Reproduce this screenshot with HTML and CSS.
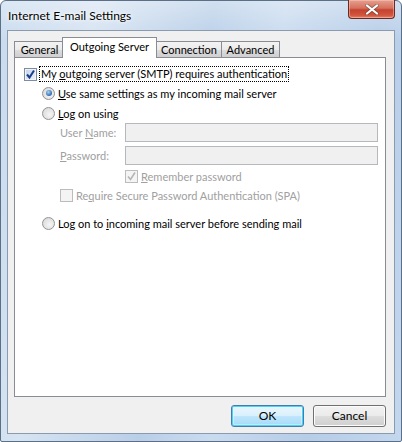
FILE: index.html
```html
<!DOCTYPE html>
<html>
<head>
<meta charset="utf-8">
<link rel="stylesheet" href="styles.css">
</head>
<body>
<div class="window">
  <div class="titlebar">
    <span class="title">Internet E-mail Settings</span>
    <div class="close">
      <svg width="14" height="11" viewBox="0 0 14 11"><path d="M2 1.5 L12 9.5 M12 1.5 L2 9.5" stroke="#3b3b3b" stroke-width="3.6" stroke-linecap="round" opacity="0.45"/><path d="M2 1.5 L12 9.5 M12 1.5 L2 9.5" stroke="#fff" stroke-width="2.2" stroke-linecap="round"/></svg>
    </div>
  </div>
  <div class="client">
    <div class="tabs">
      <div class="tab t-general">General</div>
      <div class="tab selected">Outgoing Server</div>
      <div class="tab t-conn">Connection</div>
      <div class="tab t-adv">Advanced</div>
    </div>
    <div class="panel">
      <div class="row r-auth">
        <span class="cb checked"><svg width="11" height="11" viewBox="0 0 11 11"><path d="M2 5.5 L4.5 8.5 L9 1.5" fill="none" stroke="#1b3d8f" stroke-width="2"/></svg></span>
        <span class="focus">My <u>o</u>utgoing server (SMTP) requires authentication</span>
      </div>
      <div class="row r-same">
        <span class="radio on"><span class="dot"></span></span>
        <span class="lbl"><u>U</u>se same settings as my incoming mail server</span>
      </div>
      <div class="row r-logon">
        <span class="radio"></span>
        <span class="lbl"><u>L</u>og on using</span>
      </div>
      <div class="row r-field r-user">
        <span class="flabel">User <u>N</u>ame:</span>
        <span class="input"></span>
      </div>
      <div class="row r-field r-pass">
        <span class="flabel"><u>P</u>assword:</span>
        <span class="input"></span>
      </div>
      <div class="row r-remember">
        <span class="cb disabled"><svg width="11" height="11" viewBox="0 0 11 11"><path d="M2 5.5 L4.5 8.5 L9 1.5" fill="none" stroke="#b5b5b5" stroke-width="1.6"/></svg></span>
        <span class="lbl dis"><u>R</u>emember password</span>
      </div>
      <div class="row r-spa">
        <span class="cb disabled"></span>
        <span class="lbl dis">Re<u>q</u>uire Secure Password Authentication (SPA)</span>
      </div>
      <div class="row r-before">
        <span class="radio"></span>
        <span class="lbl">Log on to <u>i</u>ncoming mail server before sending mail</span>
      </div>
    </div>
    <div class="buttons">
      <div class="btn default">OK</div>
      <div class="btn">Cancel</div>
    </div>
  </div>
</div>
</body>
</html>
```
FILE: styles.css
```css
html, body {
  margin: 0;
  padding: 0;
  background: #fff;
}
body {
  font-family: "Lato", "Liberation Sans", sans-serif;
  font-size: 11px;
  color: #000;
}
.window {
  width: 402px;
  height: 442px;
  box-sizing: border-box;
  border: 1px solid #5b6f86;
  border-radius: 6px 6px 2px 2px;
  padding: 0 6px 7px 6px;
  background:
    linear-gradient(to bottom, rgba(255,255,255,0.35), rgba(255,255,255,0) 40px),
    linear-gradient(100deg, #c9dbee 0%, #d6e3f2 20%, #b9cfe8 45%, #c9dbef 60%, #b6cde8 80%, #c3d7ee 100%);
  display: flex;
  flex-direction: column;
}
.titlebar {
  height: 29px;
  display: flex;
  align-items: flex-start;
  justify-content: space-between;
}
.title {
  margin-top: 7px;
  margin-left: 1px;
  font-size: 12px;
  color: #000;
  text-shadow: 0 0 6px #fff, 0 0 3px #fff;
}
.close {
  width: 45px;
  height: 18px;
  margin-top: -1px;
  border: 1px solid #6b2a21;
  border-top: none;
  border-radius: 0 0 4px 4px;
  background: linear-gradient(to bottom, #e6a08f 0%, #d7705e 45%, #c4432f 55%, #d2553d 85%, #e4846a 100%);
  box-shadow: inset 0 0 0 1px rgba(255,210,200,0.45);
  display: flex;
  align-items: center;
  justify-content: center;
}
.client {
  flex: 1;
  border: 1px solid #8a9bb0;
  background: #f0f0f0;
  padding: 6px 8px 0 6px;
  display: flex;
  flex-direction: column;
}
.tabs {
  display: flex;
  align-items: flex-end;
  height: 20px;
  position: relative;
  z-index: 2;
}
.tab {
  height: 15px;
  line-height: 16px;
  border: 1px solid #898c95;
  border-bottom: none;
  margin-right: -1px;
  text-align: center;
  background: linear-gradient(to bottom, #f3f3f3 0%, #ebebeb 50%, #dddddd 51%, #cfcfcf 100%);
  color: #000;
  white-space: nowrap;
}
.t-general { width: 49px; }
.t-conn { width: 64px; }
.t-adv { width: 57px; }
.tab.selected {
  width: 93px;
  height: 20px;
  line-height: 18px;
  margin: 0 -1px -1px -2px;
  background: #fff;
  position: relative;
  z-index: 3;
}
.panel {
  height: 338px;
  border: 1px solid #898c95;
  background: #fff;
  position: relative;
  z-index: 1;
}
.row {
  display: flex;
  align-items: center;
  height: 16px;
  white-space: nowrap;
}
.r-auth { margin-top: 8px; padding-left: 9px; }
.r-same { margin-top: 3px; padding-left: 27px; }
.r-logon { margin-top: 4px; padding-left: 27px; }
.r-field { height: 19px; padding-left: 45px; }
.r-user { margin-top: 2px; }
.r-pass { margin-top: 4px; }
.r-remember { margin-top: 3px; padding-left: 110px; }
.r-spa { margin-top: 3px; padding-left: 45px; }
.r-before { margin-top: 12px; padding-left: 27px; }

.cb {
  width: 11px;
  height: 11px;
  border: 1px solid #8f8f8f;
  background: linear-gradient(135deg, #dcdcdc, #fbfbfb);
  box-shadow: inset 0 0 0 1px #f4f4f4;
  display: inline-flex;
  align-items: center;
  justify-content: center;
  flex: none;
}
.cb.checked {
  background: linear-gradient(135deg, #c4d4ea, #eef3fa);
  border-color: #7b8da5;
}
.cb.disabled {
  border-color: #bcbcbc;
  background: #f4f4f4;
  box-shadow: none;
}
.focus {
  margin-left: 2px;
  padding: 0 1px;
  border: 1px dotted #000;
  line-height: 14px;
}
.radio {
  width: 11px;
  height: 11px;
  border-radius: 50%;
  border: 1px solid #939393;
  background: radial-gradient(circle at 60% 60%, #f6f6f6, #d4d4d4);
  display: inline-flex;
  align-items: center;
  justify-content: center;
  flex: none;
}
.radio.on .dot {
  width: 6px;
  height: 6px;
  border-radius: 50%;
  background: radial-gradient(circle at 40% 35%, #a9d5f4, #2e6ab0 70%, #1c4c88);
}
.lbl {
  margin-left: 3px;
}
.lbl.dis, .flabel {
  color: #a0a0a0;
}
.flabel {
  width: 65px;
  flex: none;
}
.input {
  width: 251px;
  height: 17px;
  border: 1px solid #b5b9bd;
  background: #f0f0f0;
}
.buttons {
  display: flex;
  justify-content: flex-end;
  gap: 9px;
  margin-top: 8px;
}
.btn {
  width: 71px;
  height: 20px;
  line-height: 20px;
  font-size: 12px;
  text-align: center;
  border: 1px solid #707070;
  border-radius: 3px;
  background: linear-gradient(to bottom, #f2f2f2 0%, #ebebeb 50%, #dddddd 51%, #cfcfcf 100%);
  box-shadow: inset 0 0 0 1px #fcfcfc;
}
.btn.default {
  border-color: #3c7fb1;
  background: linear-gradient(to bottom, #eaf6fd 0%, #d9f0fc 50%, #bee6fd 51%, #a7d9f5 100%);
  box-shadow: inset 0 0 0 1px #48d4f7, inset 0 0 0 2px rgba(255,255,255,0.35);
}
u {
  text-decoration: underline;
  text-underline-offset: 1px;
}
```
